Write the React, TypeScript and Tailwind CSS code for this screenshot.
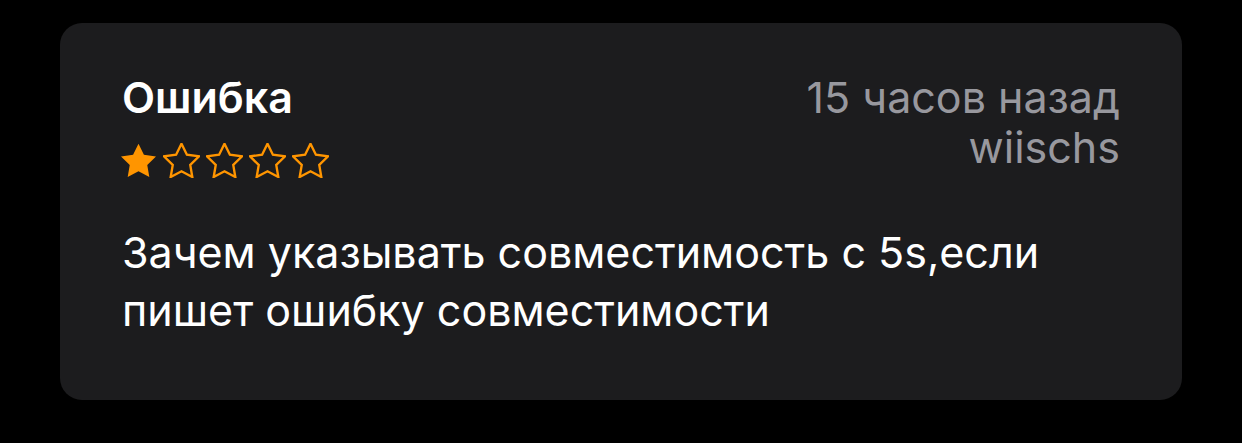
import React from 'react'

const StarIcon = ({ filled }: { filled: boolean }) => (
  <svg viewBox="1.6 1.6 20.8 20" className="w-[37px] h-[35px]" fill={filled ? '#ff9500' : 'none'} stroke="#ff9500" strokeWidth={filled ? 0 : 1.35} strokeLinejoin="miter">
    <polygon points="12 2 15.09 8.26 22 9.27 17 14.14 18.18 21.02 12 17.77 5.82 21.02 7 14.14 2 9.27 8.91 8.26" />
  </svg>
)

export default function App() {
  const rating = 1

  return (
    <div className="min-h-screen w-full bg-black pt-[23px] px-[60px] font-['Inter','Noto_Sans',sans-serif]">
      <div className="h-[377px] rounded-[22px] bg-[#1c1c1e] px-[62px] pt-[49px]">
        {/* header */}
        <div className="flex justify-between">
          <div>
            <h2 className="text-[43px] leading-[50px] font-semibold text-white">Ошибка</h2>
            <div className="flex items-center h-[50px] mt-[13px] gap-[6px] -ml-[2px]">
              {[1, 2, 3, 4, 5].map((i) => (
                <StarIcon key={i} filled={i <= rating} />
              ))}
            </div>
          </div>
          <div className="text-right text-[43px] leading-[50px] text-[#98989e]">
            <div>15 часов назад</div>
            <div>wiischs</div>
          </div>
        </div>

        {/* review body */}
        <p className="mt-[38px] text-[43px] leading-[58px] text-white">
          Зачем указывать совместимость с 5s,если
          <br />
          пишет ошибку совместимости
        </p>
      </div>
    </div>
  )
}
